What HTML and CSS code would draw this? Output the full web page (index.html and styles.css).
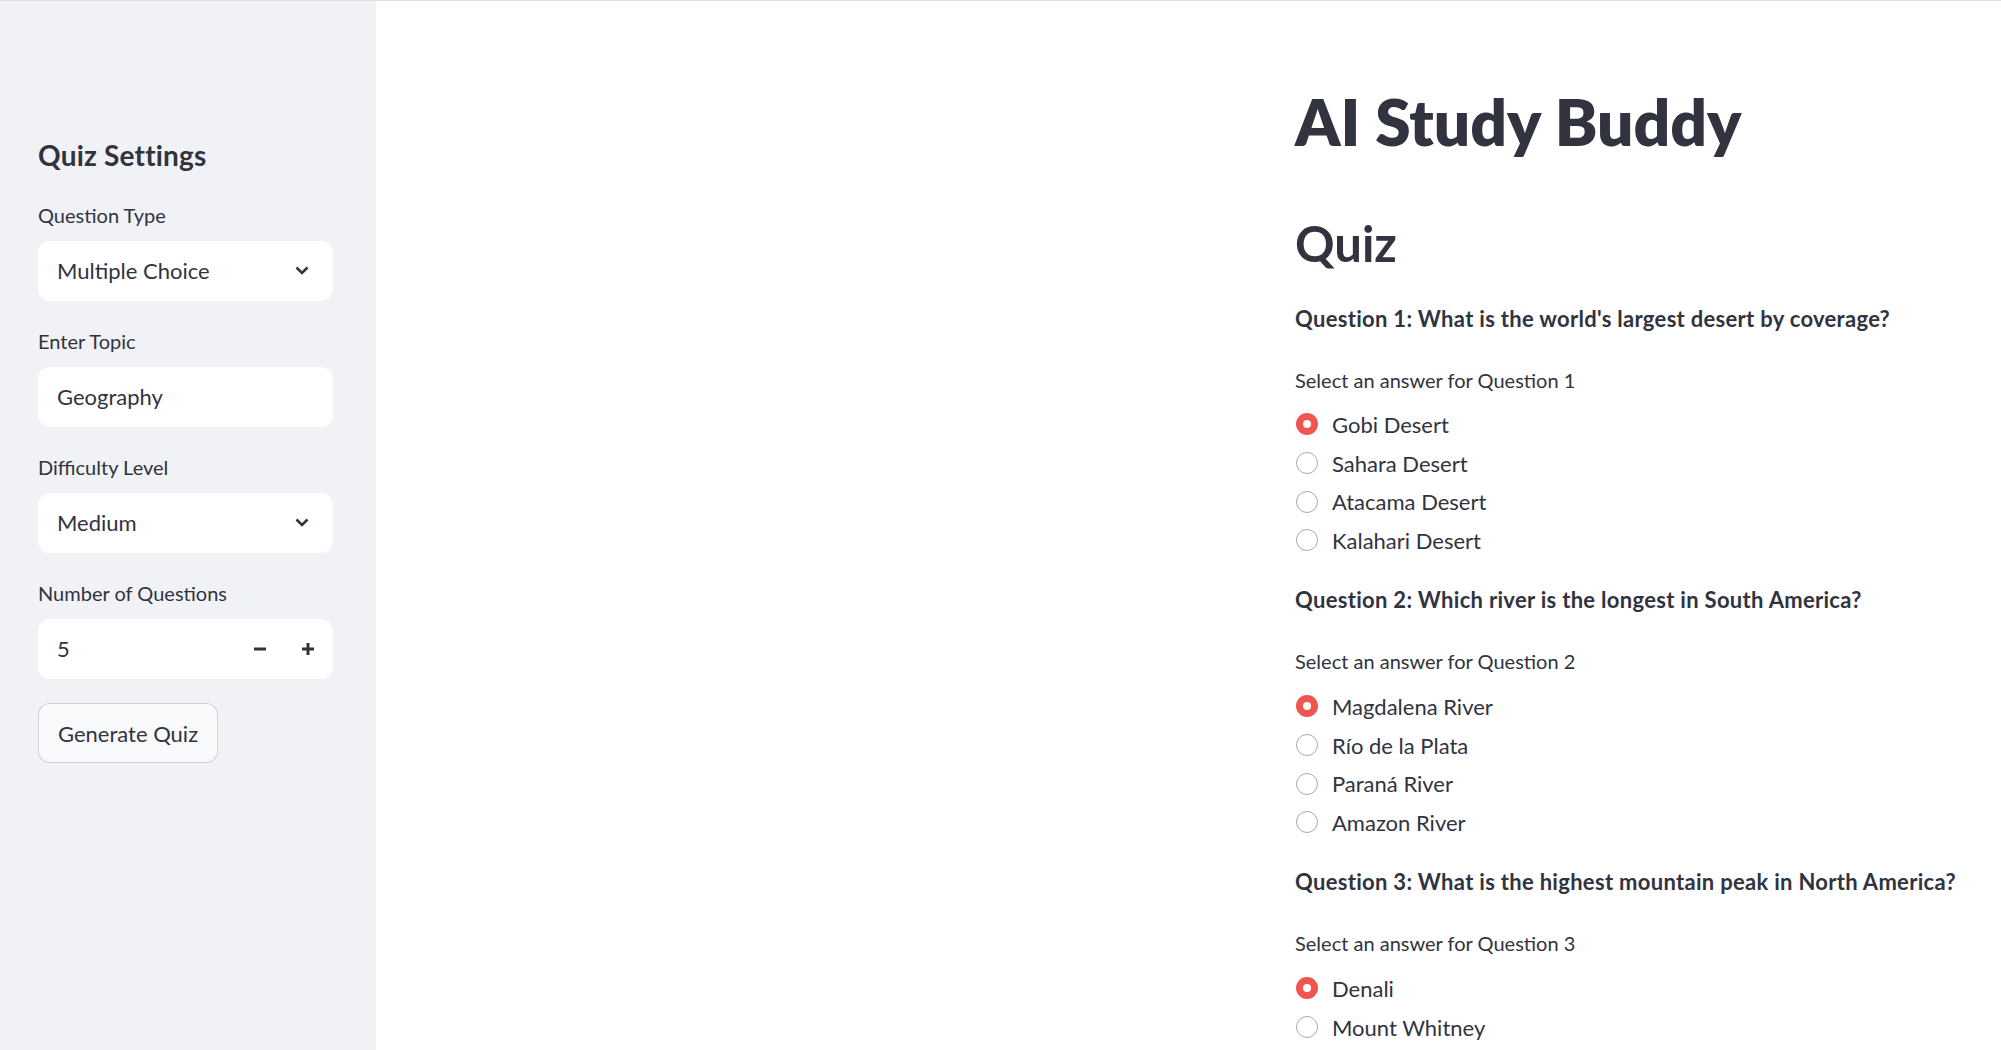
FILE: index.html
```html
<!DOCTYPE html>
<html lang="en">
<head>
<meta charset="utf-8">
<title>AI Study Buddy</title>
<link rel="stylesheet" href="styles.css">
</head>
<body>
<div class="app">
  <aside class="sidebar">
    <h2 class="side-title">Quiz Settings</h2>

    <div class="field">
      <div class="field-label">Question Type</div>
      <div class="control">
        <span class="control-value">Multiple Choice</span>
        <svg class="chev" width="14" height="9" viewBox="0 0 14 9"><polyline points="1.5,1.5 7,7 12.5,1.5" fill="none" stroke="#31333f" stroke-width="2.6"/></svg>
      </div>
    </div>

    <div class="field">
      <div class="field-label">Enter Topic</div>
      <div class="control">
        <span class="control-value">Geography</span>
      </div>
    </div>

    <div class="field">
      <div class="field-label">Difficulty Level</div>
      <div class="control">
        <span class="control-value">Medium</span>
        <svg class="chev" width="14" height="9" viewBox="0 0 14 9"><polyline points="1.5,1.5 7,7 12.5,1.5" fill="none" stroke="#31333f" stroke-width="2.6"/></svg>
      </div>
    </div>

    <div class="field">
      <div class="field-label">Number of Questions</div>
      <div class="control number">
        <span class="control-value">5</span>
        <div class="steps">
          <span class="step"><svg width="12" height="12" viewBox="0 0 12 12"><rect x="0" y="4.5" width="12" height="3" fill="#31333f"/></svg></span>
          <span class="step"><svg width="12" height="12" viewBox="0 0 12 12"><rect x="0" y="4.5" width="12" height="3" fill="#31333f"/><rect x="4.5" y="0" width="3" height="12" fill="#31333f"/></svg></span>
        </div>
      </div>
    </div>

    <button class="btn" type="button">Generate Quiz</button>
  </aside>

  <main class="main">
    <div class="content">
      <h1 class="title">AI Study Buddy</h1>
      <h2 class="subtitle">Quiz</h2>

      <section class="question">
        <p class="q-text">Question 1: What is the world's largest desert by coverage?</p>
        <div class="q-label">Select an answer for Question 1</div>
        <div class="options">
          <div class="option"><span class="dot on"></span><span>Gobi Desert</span></div>
          <div class="option"><span class="dot"></span><span>Sahara Desert</span></div>
          <div class="option"><span class="dot"></span><span>Atacama Desert</span></div>
          <div class="option"><span class="dot"></span><span>Kalahari Desert</span></div>
        </div>
      </section>

      <section class="question">
        <p class="q-text">Question 2: Which river is the longest in South America?</p>
        <div class="q-label">Select an answer for Question 2</div>
        <div class="options">
          <div class="option"><span class="dot on"></span><span>Magdalena River</span></div>
          <div class="option"><span class="dot"></span><span>Río de la Plata</span></div>
          <div class="option"><span class="dot"></span><span>Paraná River</span></div>
          <div class="option"><span class="dot"></span><span>Amazon River</span></div>
        </div>
      </section>

      <section class="question">
        <p class="q-text">Question 3: What is the highest mountain peak in North America?</p>
        <div class="q-label">Select an answer for Question 3</div>
        <div class="options">
          <div class="option"><span class="dot on"></span><span>Denali</span></div>
          <div class="option"><span class="dot"></span><span>Mount Whitney</span></div>
        </div>
      </section>
    </div>
  </main>
</div>
</body>
</html>
```

FILE: styles.css
```css
* { box-sizing: border-box; }

html, body {
  margin: 0;
  padding: 0;
}

body {
  font-family: Lato, "Noto Sans", sans-serif;
  color: #31333f;
  background: #ffffff;
  overflow: hidden;
}

.app {
  display: flex;
  height: 1050px;
  border-top: 1px solid #dedfe2;
  overflow: hidden;
}

/* Sidebar */
.sidebar {
  width: 376px;
  flex: none;
  background: #f0f2f6;
  padding: 137px 43px 0 38px;
  display: flex;
  flex-direction: column;
  align-items: flex-start;
}

.side-title {
  margin: 0 0 28px 0;
  font-size: 28px;
  line-height: 34px;
  font-weight: 700;
  letter-spacing: 0.2px;
}

.field {
  width: 100%;
  margin-bottom: 25.5px;
}

.field-label {
  font-size: 20px;
  line-height: 30px;
  margin-bottom: 10.5px;
}

.control {
  height: 60px;
  background: #ffffff;
  border-radius: 12px;
  display: flex;
  align-items: center;
  justify-content: space-between;
  padding: 0 24px 0 19px;
  font-size: 22px;
}

.chev { display: block; }

.control.number { padding-right: 13px; }

.steps {
  display: flex;
  gap: 24px;
}

.step {
  width: 24px;
  height: 24px;
  display: flex;
  align-items: center;
  justify-content: center;
}

.step svg { display: block; }

.btn {
  margin-top: -1px;
  height: 60px;
  padding: 0 19px;
  font-family: inherit;
  font-size: 22px;
  color: #31333f;
  background: #f9fafb;
  border: 1px solid rgba(49, 51, 63, 0.2);
  border-radius: 12px;
}

/* Main */
.main {
  flex: 1;
  padding: 83px 0 0 919px;
  overflow: hidden;
}

.content {
  width: 700px;
}

.title {
  margin: 0;
  font-size: 64px;
  line-height: 76px;
  font-weight: 800;
  white-space: nowrap;
}

.subtitle {
  margin: 53.5px 0 0 0;
  font-size: 49px;
  line-height: 59px;
  font-weight: 700;
}

.question {
  margin-bottom: 22.67px;
}

.q-text {
  margin: 28px 0 0 0;
  font-size: 22px;
  line-height: 36px;
  font-weight: 700;
  letter-spacing: 0.3px;
  white-space: nowrap;
}

.question + .question .q-text { margin-top: 0; }

.q-label {
  margin-top: 28px;
  font-size: 20px;
  line-height: 30px;
}

.options {
  margin-top: 10.67px;
}

.option {
  height: 38.67px;
  display: flex;
  align-items: center;
  gap: 14px;
  font-size: 22px;
}

.dot {
  width: 22px;
  height: 22px;
  flex: none;
  margin-left: 1px;
  border-radius: 50%;
  border: 1.5px solid #a8a9af;
  background: #ffffff;
  display: flex;
  align-items: center;
  justify-content: center;
}

.dot.on {
  border: none;
  background: #f0564f;
}

.dot.on::after {
  content: "";
  width: 8px;
  height: 8px;
  border-radius: 50%;
  background: #ffffff;
}
```
